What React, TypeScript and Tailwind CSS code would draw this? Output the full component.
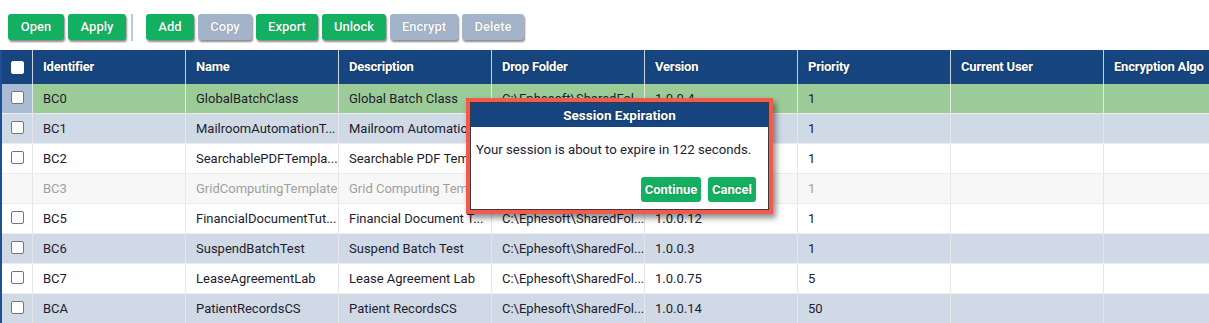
import React from 'react';

type Row = {
  id: string;
  name: string;
  desc: string;
  folder: string;
  version: string;
  priority: string;
  tone: 'selected' | 'alt' | 'plain' | 'disabled';
};

const rows: Row[] = [
  { id: 'BC0', name: 'GlobalBatchClass', desc: 'Global Batch Class', folder: 'C:\\Ephesoft\\SharedFol...', version: '1.0.0.4', priority: '1', tone: 'selected' },
  { id: 'BC1', name: 'MailroomAutomationT...', desc: 'Mailroom Automation T...', folder: 'C:\\Ephesoft\\SharedFol...', version: '1.0.0.9', priority: '1', tone: 'alt' },
  { id: 'BC2', name: 'SearchablePDFTempla...', desc: 'Searchable PDF Templa...', folder: 'C:\\Ephesoft\\SharedFol...', version: '1.0.0.2', priority: '1', tone: 'plain' },
  { id: 'BC3', name: 'GridComputingTemplate', desc: 'Grid Computing Templa...', folder: 'C:\\Ephesoft\\SharedFol...', version: '1.0.0.1', priority: '1', tone: 'disabled' },
  { id: 'BC5', name: 'FinancialDocumentTut...', desc: 'Financial Document T...', folder: 'C:\\Ephesoft\\SharedFol...', version: '1.0.0.12', priority: '1', tone: 'plain' },
  { id: 'BC6', name: 'SuspendBatchTest', desc: 'Suspend Batch Test', folder: 'C:\\Ephesoft\\SharedFol...', version: '1.0.0.3', priority: '1', tone: 'alt' },
  { id: 'BC7', name: 'LeaseAgreementLab', desc: 'Lease Agreement Lab', folder: 'C:\\Ephesoft\\SharedFol...', version: '1.0.0.75', priority: '5', tone: 'plain' },
  { id: 'BCA', name: 'PatientRecordsCS', desc: 'Patient RecordsCS', folder: 'C:\\Ephesoft\\SharedFol...', version: '1.0.0.14', priority: '50', tone: 'alt' },
];

const headers = ['Identifier', 'Name', 'Description', 'Drop Folder', 'Version', 'Priority', 'Current User', 'Encryption Algo'];

function ToolButton({ label, enabled = true, width }: { label: string; enabled?: boolean; width: string }) {
  return (
    <button
      type="button"
      className={`h-[26px] ${width} rounded-[3px] text-[13px] font-medium text-white shadow-[1px_2px_2px_rgba(0,0,0,0.45)] [text-shadow:0_0_1px_rgba(0,0,0,0.3)] ${
        enabled ? 'bg-[#14b061]' : 'bg-[#a3b3ca]'
      }`}
    >
      {label}
    </button>
  );
}

function Checkbox({ header = false }: { header?: boolean }) {
  return (
    <span
      className={`block w-[13px] h-[13px] rounded-[2px] border ${
        header ? 'bg-white border-white' : 'bg-white border-[#767676]'
      }`}
    />
  );
}

export default function App() {
  const rowBg = (tone: Row['tone']) =>
    tone === 'selected'
      ? 'bg-[#9bcc98]'
      : tone === 'alt'
      ? 'bg-[#d0dae6]'
      : tone === 'disabled'
      ? 'bg-[#f7f7f7]'
      : 'bg-white';

  return (
    <div className="relative w-[1209px] h-[323px] overflow-hidden bg-white font-['Roboto',sans-serif]">
      {/* toolbar */}
      <div className="flex items-center h-[50px] pl-2 pt-[4px]">
        <div className="flex gap-1">
          <ToolButton label="Open" width="w-[56px]" />
          <ToolButton label="Apply" width="w-[58px]" />
        </div>
        <div className="w-[2px] h-[27px] bg-[#b3cbe8] ml-[5px] mr-[13px]" />
        <div className="flex gap-1">
          <ToolButton label="Add" width="w-[48px]" />
          <ToolButton label="Copy" enabled={false} width="w-[54px]" />
          <ToolButton label="Export" width="w-[62px]" />
          <ToolButton label="Unlock" width="w-[64px]" />
          <ToolButton label="Encrypt" enabled={false} width="w-[68px]" />
          <ToolButton label="Delete" enabled={false} width="w-[62px]" />
        </div>
      </div>

      {/* grid */}
      <div className="border-l-2 border-[#1f4f95] w-[1260px] text-[13px]">
        <div className="flex h-[34px] bg-[#17457f] text-white">
          <div className="w-[31px] shrink-0 border-r border-[#c9d3df] flex items-center justify-center">
            <Checkbox header />
          </div>
          {headers.map((h) => (
            <div
              key={h}
              className="w-[153px] shrink-0 flex items-center pl-[10px] border-r border-[#c9d3df] font-bold whitespace-nowrap tracking-[-0.2px] [text-shadow:0_0_2px_rgba(0,0,0,0.5)]"
            >
              {h}
            </div>
          ))}
        </div>
        {rows.map((r) => {
          const text = r.tone === 'disabled' ? 'text-[#a0a0a0]' : 'text-[#231b2e]';
          const cells = [r.id, r.name, r.desc, r.folder, r.version, r.priority, '', ''];
          return (
            <div key={r.id} className={`flex h-[30px] ${rowBg(r.tone)} border-b border-[#ececec]`}>
              <div
                className={`w-[31px] shrink-0 border-r border-[#e6e6e6] flex items-center justify-center pb-[3px] ${
                  r.tone === 'selected' ? 'bg-[#a9bcd3]' : ''
                }`}
              >
                {r.tone !== 'disabled' && <Checkbox />}
              </div>
              {cells.map((c, i) => (
                <div
                  key={i}
                  className={`w-[153px] shrink-0 flex items-center pl-[10px] pr-[2px] border-r border-[#e6e6e6] whitespace-nowrap overflow-hidden ${text}`}
                >
                  {c}
                </div>
              ))}
            </div>
          );
        })}
      </div>

      {/* session expiration dialog */}
      <div className="absolute left-[466px] top-[98px] w-[307px] border-[4px] border-[#f15a4c] shadow-[3px_4px_6px_rgba(0,0,0,0.45)]">
        <div className="border border-[#3a3a3a] bg-white">
          <div className="h-[24px] bg-[#17457f] flex items-center justify-center text-white text-[13.5px] font-bold [text-shadow:0_0_2px_rgba(0,0,0,0.5)]">
            Session Expiration
          </div>
          <div className="px-[5px] pt-[13px] text-[13.2px] text-[#1c2233]">
            Your session is about to expire in 122 seconds.
          </div>
          <div className="flex justify-end gap-[7px] pr-[12px] pt-[17px] pb-[7px]">
            <button
              type="button"
              className="h-[25px] w-[60px] rounded-[3px] bg-[#14b061] text-white text-[13px] font-bold [text-shadow:0_0_2px_rgba(0,0,0,0.3)]"
            >
              Continue
            </button>
            <button
              type="button"
              className="h-[25px] w-[48px] rounded-[3px] bg-[#14b061] text-white text-[13px] font-bold [text-shadow:0_0_2px_rgba(0,0,0,0.3)]"
            >
              Cancel
            </button>
          </div>
        </div>
      </div>
    </div>
  );
}
